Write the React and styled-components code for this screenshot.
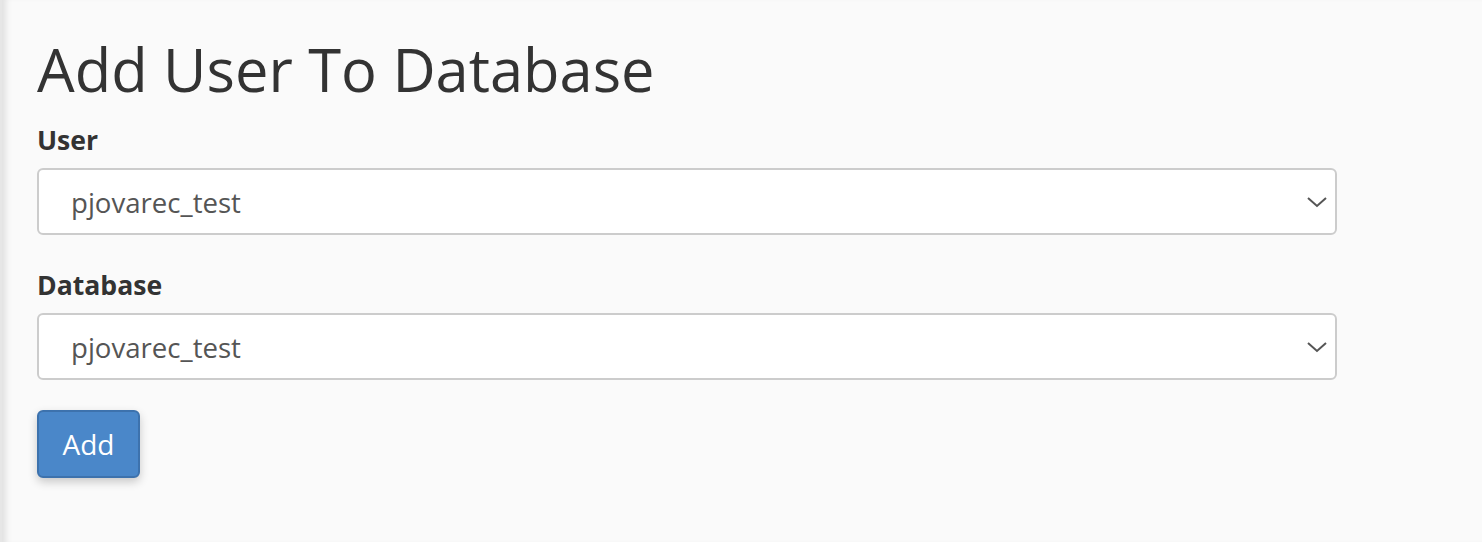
import React from "react";
import styled, { createGlobalStyle } from "styled-components";

const GlobalStyle = createGlobalStyle`
  html, body {
    margin: 0;
    padding: 0;
    background: #fafafa;
  }
  body {
    font-family: "Open Sans", "Liberation Sans", sans-serif;
    color: #333;
  }
`;

const Page = styled.div`
  min-height: 542px;
  background: #fafafa;
  box-shadow: inset 8px 0 6px -4px rgba(0, 0, 0, 0.1);
  border-left: 2px solid #e6e6e6;
  padding: 27px 0 0 35px;
  box-sizing: border-box;
`;

const Title = styled.h1`
  margin: 0 0 12px;
  font-size: 59.6px;
  font-weight: 400;
  line-height: 84px;
  color: #333;
`;

const Field = styled.div`
  & + & {
    margin-top: 33px;
  }
`;

const Label = styled.label`
  display: block;
  font-size: 26.6px;
  font-weight: 700;
  line-height: 34px;
  margin-bottom: 11px;
  color: #333;
`;

const SelectBox = styled.div`
  position: relative;
  width: 1300px;
  height: 67px;
  box-sizing: border-box;
  border: 2px solid #ccc;
  border-radius: 6px;
  background: #fff;
  display: flex;
  align-items: center;
  padding: 0 32px;
  font-size: 27.6px;
  color: #555;
`;

const Chevron = styled.svg`
  position: absolute;
  right: 7px;
  top: 50%;
  transform: translateY(-50%);
`;

const Button = styled.button`
  margin-top: 30px;
  width: 103px;
  height: 68px;
  background: #4a87c9;
  border: 2px solid #3d72ad;
  border-radius: 6px;
  color: #fff;
  font-family: "Open Sans", "Liberation Sans", sans-serif;
  font-size: 28px;
  box-shadow: 0 4px 10px rgba(0, 0, 0, 0.2);
`;

function Select({ value }) {
  return (
    <SelectBox>
      {value}
      <Chevron width="22" height="12" viewBox="0 0 22 12">
        <path d="M2 2 L11 10 L20 2" fill="none" stroke="#555" strokeWidth="2" />
      </Chevron>
    </SelectBox>
  );
}

export default function App() {
  return (
    <>
      <GlobalStyle />
      <Page>
        <Title>Add User To Database</Title>
        <Field>
          <Label>User</Label>
          <Select value="pjovarec_test" />
        </Field>
        <Field>
          <Label>Database</Label>
          <Select value="pjovarec_test" />
        </Field>
        <Button>Add</Button>
      </Page>
    </>
  );
}
